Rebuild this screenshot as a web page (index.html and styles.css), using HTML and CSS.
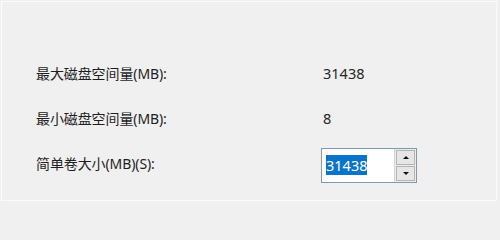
FILE: index.html
```html
<!DOCTYPE html>
<html>
<head>
<meta charset="utf-8">
<link rel="stylesheet" href="styles.css">
</head>
<body>
<div class="wrap">
  <div class="frame">
    <div class="grid">
      <div class="label">最大磁盘空间量(MB):</div>
      <div class="value">31438</div>
      <div class="label">最小磁盘空间量(MB):</div>
      <div class="value">8</div>
      <div class="label">简单卷大小(MB)(S):</div>
      <div class="spin">
        <div class="field"><span class="sel">31438</span></div>
        <div class="buttons">
          <div class="btn"><span class="up"></span></div>
          <div class="btn"><span class="down"></span></div>
        </div>
      </div>
    </div>
  </div>
</div>
</body>
</html>
```
FILE: styles.css
```css
html, body {
  margin: 0;
  background: #f0f0f0;
}
body {
  width: 500px;
  height: 206px;
  overflow: hidden;
  font-family: "Noto Sans", "Noto Sans CJK SC", sans-serif;
  font-size: 14px;
  color: #1e1e1e;
}
.wrap {
  padding: 1px;
}
.frame {
  width: 496px;
  height: 200px;
  box-sizing: border-box;
  border: 1px solid #fbfbfb;
  padding: 48px 0 0 34px;
}
.grid {
  display: grid;
  grid-template-columns: 285px 96px;
  grid-template-rows: 45px 45px 45px;
  align-items: center;
}
.label {
  white-space: nowrap;
  letter-spacing: -0.1px;
}
.value {
  font-size: 14.5px;
  padding-left: 2px;
  color: #262626;
}
.spin {
  display: flex;
  width: 96px;
  height: 35px;
  box-sizing: border-box;
  border: 1px solid #7d9bab;
  background: #fff;
  margin-top: 5px;
}
.field {
  flex: 1;
  display: flex;
  align-items: center;
  padding-left: 4px;
}
.sel {
  background: #0a74c9;
  color: #fff;
  font-size: 14.5px;
  height: 20px;
  line-height: 20px;
}
.buttons {
  width: 19px;
  display: flex;
  flex-direction: column;
  background: #ececec;
  border-left: 1px solid #d4d4d4;
  padding: 1px;
  gap: 1px;
}
.btn {
  flex: 1;
  border: 1px solid #b4b4b4;
  background: #e6e6e6;
  display: flex;
  align-items: center;
  justify-content: center;
}
.up {
  width: 0;
  height: 0;
  border-left: 3px solid transparent;
  border-right: 3px solid transparent;
  border-bottom: 3px solid #111;
}
.down {
  width: 0;
  height: 0;
  border-left: 3px solid transparent;
  border-right: 3px solid transparent;
  border-top: 3px solid #111;
}
```
